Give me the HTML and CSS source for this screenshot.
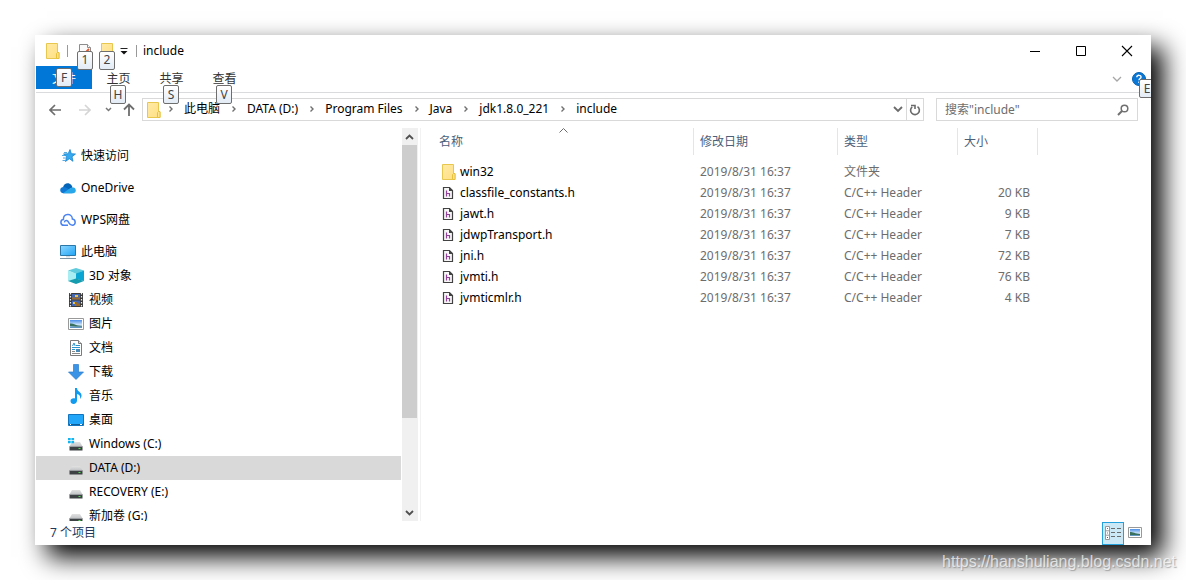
FILE: index.html
```html
<!DOCTYPE html>
<html lang="zh-CN">
<head>
<meta charset="utf-8">
<title>include</title>
<link rel="stylesheet" href="styles.css">
</head>
<body>
<svg class="defs" width="0" height="0" aria-hidden="true">
  <defs>
    <linearGradient id="gold" x1="0" y1="0" x2="1" y2="1"><stop offset="0" stop-color="#ffeaa6"/><stop offset="1" stop-color="#ffdf82"/></linearGradient>
    <linearGradient id="screen" x1="0" y1="0" x2="1" y2="1"><stop offset="0" stop-color="#8fd8ff"/><stop offset="1" stop-color="#1fa4f5"/></linearGradient>
    <linearGradient id="sky" x1="0" y1="0" x2="0" y2="1"><stop offset="0" stop-color="#4a8de8"/><stop offset=".6" stop-color="#cfe6fb"/><stop offset="1" stop-color="#4a86b5"/></linearGradient>
    <linearGradient id="metal" x1="0" y1="0" x2="0" y2="1"><stop offset="0" stop-color="#e2e2e2"/><stop offset="1" stop-color="#bfc2c4"/></linearGradient>
    <symbol id="folder" viewBox="0 0 14 16"><path d="M.5.5h11v9.500h1.500v5.500H.5z" fill="url(#gold)" stroke="#e8c74f"/><path d="M10.500 15.500v-5l1-1h1.500v6z" fill="#ffe28c" stroke="#e8c13c"/></symbol>
    <symbol id="header-file" viewBox="0 0 14 14"><path d="M1.500 1.500h6l3 3v8h-9z" fill="#f6f6f6" stroke="#424242" stroke-width="1.200"/><path d="M7 1v4h4z" fill="#424242"/><path d="M4.500 4.500v6M4.500 7.500h3v3" fill="none" stroke="#93429b" stroke-width="1.200"/></symbol>
    <symbol id="crumb" viewBox="0 0 6 8"><path d="M1.500 1.500 4 4 1.500 6.500" fill="none" stroke="#707070" stroke-width="1.400"/></symbol>
    <symbol id="photo" viewBox="0 0 16 12"><path d="M.5.5h15v11H.5z" fill="#fff" stroke="#999"/><path d="M2 2h12v8H2z" fill="url(#sky)"/><path d="M2 5.500c3-.5 5 1.500 8 2l4 .5v.5c-5 0-8 0-12-.5z" fill="#39705d"/></symbol>
    <symbol id="drive" viewBox="0 0 16 16"><path d="M4 6h8l2.500 4.500h-13z" fill="url(#metal)"/><path d="M1.500 10.500h13v4h-13z" fill="#3e4143"/><path d="M1.500 10.500h13" stroke="#9a9d9f"/><path d="M10.500 12h2v1h-2z" fill="#4be04f"/></symbol>
  </defs>
</svg>
<main class="window">
  <header class="titlebar">
    <svg class="folder" width="14" height="16"><use href="#folder"/></svg>
    <span class="rule"></span>
    <button class="quick" aria-label="属性"><svg width="14" height="16" viewBox="0 0 14 16"><path d="M1.500 1.500h8l3 3v11h-11z" fill="#fafafa" stroke="#8c8c8c"/><path d="M9.500 1.500v3h3" fill="#fff" stroke="#8c8c8c"/><path d="m8.500 8.500 2.500-2.500" stroke="#e4572e" stroke-width="1.800"/></svg><kbd class="tip">1</kbd></button>
    <button class="quick" aria-label="新建文件夹"><svg width="14" height="16" viewBox="0 0 14 16"><path d="M1.500.5h11v15h-11z" fill="url(#gold)" stroke="#e8c74f"/></svg><kbd class="tip">2</kbd></button>
    <button class="more" aria-label="自定义"><svg width="8" height="8" viewBox="0 0 8 8"><path d="M.5 1.500h7" stroke="#222"/><path d="M.5 4h7L4 7.500z" fill="#111"/></svg></button>
    <span class="rule"></span>
    <h1 class="title">include</h1>
    <button class="caption" aria-label="最小化"><svg width="12" height="12" viewBox="0 0 12 12"><path d="M1 6.500h10" stroke="#000"/></svg></button>
    <button class="caption" aria-label="最大化"><svg width="12" height="12" viewBox="0 0 12 12"><path d="M1.500 1.500h9v9h-9z" fill="none" stroke="#000"/></svg></button>
    <button class="caption" aria-label="关闭"><svg width="12" height="12" viewBox="0 0 12 12"><path d="m1 1 10 10M11 1 1 11" stroke="#000" stroke-width="1.100"/></svg></button>
  </header>

  <div class="ribbon">
    <button class="tab file">文件<kbd class="tip">F</kbd></button>
    <button class="tab">主页<kbd class="tip">H</kbd></button>
    <button class="tab">共享<kbd class="tip">S</kbd></button>
    <button class="tab">查看<kbd class="tip">V</kbd></button>
    <span class="spacer"></span>
    <button class="expand" aria-label="展开功能区"><svg width="10" height="6" viewBox="0 0 10 6"><path d="m1 1 4 4 4-4" fill="none" stroke="#a6a6a6" stroke-width="1.300"/></svg></button>
    <button class="help" aria-label="帮助"><svg width="14" height="14" viewBox="0 0 14 14"><circle cx="7" cy="7" r="6.500" fill="#0a78d6" stroke="#0560b0"/><path d="M4.800 5.200c.2-2.600 4.400-2.400 4.200 0C9 6.500 7 6.700 7 8.300M7 9.500V11" fill="none" stroke="#fff" stroke-width="1.400"/></svg><kbd class="tip">E</kbd></button>
  </div>

  <div class="navbar">
    <button class="nav" aria-label="后退"><svg width="12" height="12" viewBox="0 0 12 12"><path d="M12 6H1M6 1 1 6l5 5" fill="none" stroke="#6e6e6e" stroke-width="1.700"/></svg></button>
    <button class="nav" aria-label="前进"><svg width="12" height="12" viewBox="0 0 12 12"><path d="M0 6h11M6 1l5 5-5 5" fill="none" stroke="#d5d5d5" stroke-width="1.600"/></svg></button>
    <button class="recent" aria-label="最近位置"><svg width="7" height="5" viewBox="0 0 7 5"><path d="m1 1 2.500 2.500L6 1" fill="none" stroke="#777" stroke-width="1.500"/></svg></button>
    <button class="up" aria-label="向上"><svg width="12" height="13" viewBox="0 0 12 13"><path d="M6 13V1.500M1 6.500l5-5 5 5" fill="none" stroke="#6e6e6e" stroke-width="1.800"/></svg></button>
    <div class="address">
      <svg class="folder" width="14" height="16"><use href="#folder"/></svg>
      <ol class="crumbs">
        <li><svg width="6" height="8"><use href="#crumb"/></svg><a href="#pc">此电脑</a></li>
        <li><svg width="6" height="8"><use href="#crumb"/></svg><a href="#d">DATA (D:)</a></li>
        <li><svg width="6" height="8"><use href="#crumb"/></svg><a href="#pf">Program Files</a></li>
        <li><svg width="6" height="8"><use href="#crumb"/></svg><a href="#java">Java</a></li>
        <li><svg width="6" height="8"><use href="#crumb"/></svg><a href="#jdk">jdk1.8.0_221</a></li>
        <li><svg width="6" height="8"><use href="#crumb"/></svg><a href="#include">include</a></li>
      </ol>
      <button class="history" aria-label="历史"><svg width="10" height="7" viewBox="0 0 10 7"><path d="m1 1 4 4 4-4" fill="none" stroke="#6b6b6b" stroke-width="1.800"/></svg></button>
      <button class="refresh" aria-label="刷新"><svg width="12" height="12" viewBox="0 0 12 12"><path d="M3.200 2.800A4.400 4.400 0 1 0 8.500 2.600" fill="none" stroke="#6b6b6b" stroke-width="1.600"/><path d="M2 1.500h4V5" fill="none" stroke="#6b6b6b" stroke-width="1.600"/></svg></button>
    </div>
    <form class="search">
      <input class="query" type="search" aria-label="搜索" placeholder='搜索"include"'>
      <button class="go" type="button" aria-label="搜索"><svg width="12" height="12" viewBox="0 0 12 12"><circle cx="7.500" cy="4.500" r="3.300" fill="none" stroke="#707070" stroke-width="1.500"/><path d="M5 7 1 11" stroke="#707070" stroke-width="1.900"/></svg></button>
    </form>
  </div>

  <div class="body">
    <nav class="tree" aria-label="导航窗格">
      <a class="node root" href="#quick"><svg width="16" height="16" viewBox="0 0 16 16"><path d="m10 1.500 1.300 4.200 4.200.3-3.500 2.700 1 4.600-3.700-2.600L5.500 13.500l1.300-4.700L3.500 6l4.700-.3z" fill="#35aaf0" stroke="#1683ce" stroke-width=".8"/><path d="M4 4.500h3M2 7.500h3M3 10h3M2.500 12.500h3" stroke="#2b95dc" stroke-width=".8"/></svg>快速访问</a>
      <a class="node root" href="#onedrive"><svg width="16" height="16" viewBox="0 0 16 16"><path d="M3 7.500C3.500 4 8 1.500 11.300 5c.7.800 1 1.500 1.200 2.500L8 10z" fill="#0364b8"/><path d="M3.500 13.200C-.8 13.200-.8 7.500 3 7c2-.3 4 .8 5.500 2l4 4.200z" fill="#0f78d4"/><path d="M3 13.200 9 9c1.500-1.500 4-2 5.300-1.200C16.500 9 16.500 13.200 13 13.200z" fill="#28a8ea"/></svg>OneDrive</a>
      <a class="node root" href="#wps"><svg width="16" height="16" viewBox="0 0 16 16"><path d="M8 13.300H4C0 13.300 0 8 3.400 7.600 3.200 1.300 12 .8 12.400 7c3.700.5 3.700 6.300 0 6.300-3 0-3-2-4.500-4-1.400-1.600-3.500-.5-3.300 1" fill="none" stroke="#4b83f0" stroke-width="1.500"/></svg>WPS网盘</a>
      <a class="node root" href="#pc"><svg width="16" height="16" viewBox="0 0 16 16"><path d="M.5 1.500h15v10H.5z" fill="url(#screen)" stroke="#2b78a8"/><path d="M6 12h4v1.500H6z" fill="#d6dde2"/><path d="M0 14.500h16" stroke="#7d93a3"/></svg>此电脑</a>
      <a class="node" href="#objects"><svg width="16" height="16" viewBox="0 0 16 16"><path d="m8 0 8 2.500L8 6 0 2.500z" fill="#5fcbdc"/><path d="m0 2.500 8 3V11l-8 2z" fill="#a8edf1"/><path d="m16 2.500-8 3V11l8 2z" fill="#0ba5d4"/><path d="m0 13 8-2.500 8 2.500-8 3z" fill="#159caf"/></svg>3D 对象</a>
      <a class="node" href="#video"><svg width="16" height="16" viewBox="0 0 16 16"><path d="M1 1h14v14H1z" fill="#3b3b3b"/><path d="M4 2h8v5.500H4zM4 8.500h8V14H4z" fill="#4268b4"/><path d="M4 5.500h8v2H4zM7 9l5 3.500V14H7z" fill="#9a6b31"/><path d="M7 3h3v2H7zM5 10h2v2H5z" fill="#f0c43c"/><path d="M2.500 1v14M13.500 1v14" stroke="#eee" stroke-width="1.200" stroke-dasharray="1.500 1.500"/></svg>视频</a>
      <a class="node" href="#pictures"><svg width="16" height="12"><use href="#photo"/></svg>图片</a>
      <a class="node" href="#docs"><svg width="16" height="16" viewBox="0 0 16 16"><path d="M2.500.5h8l3 3v12h-11z" fill="#fff" stroke="#7b7b7b"/><path d="M10.500.5v3h3" fill="#ddd" stroke="#7b7b7b"/><path d="m4.500 6 1.500-3 1.200 3M8 5.500h4M4 7.500h8M4 9.500h3" fill="none" stroke="#2894d0"/><path d="M4 11.500h3M4 13.500h8" stroke="#888"/><path d="M8 9h4v3H8z" fill="#498bb6"/></svg>文档</a>
      <a class="node" href="#downloads"><svg width="16" height="16" viewBox="0 0 16 16"><path d="M5.500.5h5V8h5L8 15.500.5 8h5z" fill="#3b94e6" stroke="#297dcb" stroke-width=".7"/></svg>下载</a>
      <a class="node" href="#music"><svg width="16" height="16" viewBox="0 0 16 16"><path d="M7 0h2c0 4 5 4 4.500 8-.2 1.500-1 2.500-1.500 3 .7-3-.5-4-3-5v6.500C9 17 2.500 17 2.500 13c0-2 2-3 4.500-2.500z" fill="#109af0"/></svg>音乐</a>
      <a class="node" href="#desktop"><svg width="16" height="16" viewBox="0 0 16 16"><path d="M.5 2.500h15v11H.5z" fill="#22a6fa" stroke="#1274bd"/><path d="M1 12.500h14" stroke="#0c5f9d"/><path d="M2 12.500h1M12 12.500h2" stroke="#fff"/></svg>桌面</a>
      <a class="node" href="#c"><svg width="16" height="16" viewBox="0 0 16 16"><use href="#drive" width="16" height="16"/><path d="M0 2h2.700v2.200H0zM3.400 2h2.700v2.200H3.400zM0 5h2.700v2.200H0zM3.400 5h2.700v2.200H3.400z" fill="#12b5f0"/></svg>Windows (C:)</a>
      <a class="node selected" href="#d" aria-current="true"><svg width="16" height="16"><use href="#drive"/></svg>DATA (D:)</a>
      <a class="node" href="#e"><svg width="16" height="16"><use href="#drive"/></svg>RECOVERY (E:)</a>
      <a class="node" href="#g"><svg width="16" height="16"><use href="#drive"/></svg>新加卷 (G:)</a>
    </nav>
    <div class="scrollbar">
      <button class="step" aria-label="向上滚动"><svg width="9" height="6" viewBox="0 0 9 6"><path d="m1 5 3.500-3.500L8 5" fill="none" stroke="#505050" stroke-width="1.800"/></svg></button>
      <div class="track"><div class="thumb"></div></div>
      <button class="step" aria-label="向下滚动"><svg width="9" height="6" viewBox="0 0 9 6"><path d="m1 1 3.500 3.500L8 1" fill="none" stroke="#505050" stroke-width="1.800"/></svg></button>
    </div>
    <section class="files">
      <table class="list">
        <colgroup><col class="c-name"><col class="c-date"><col class="c-type"><col class="c-size"></colgroup>
        <thead>
          <tr><th scope="col" aria-sort="ascending">名称<svg class="sort" width="9" height="5" viewBox="0 0 9 5"><path d="m.5 4.500 4-4 4 4" fill="none" stroke="#6b6b6b"/></svg></th><th scope="col">修改日期</th><th scope="col">类型</th><th scope="col">大小</th></tr>
        </thead>
        <tbody>
          <tr><td><span class="item"><svg width="14" height="16"><use href="#folder"/></svg>win32</span></td><td>2019/8/31 16:37</td><td>文件夹</td><td></td></tr>
          <tr><td><span class="item"><svg width="14" height="14"><use href="#header-file"/></svg>classfile_constants.h</span></td><td>2019/8/31 16:37</td><td>C/C++ Header</td><td>20 KB</td></tr>
          <tr><td><span class="item"><svg width="14" height="14"><use href="#header-file"/></svg>jawt.h</span></td><td>2019/8/31 16:37</td><td>C/C++ Header</td><td>9 KB</td></tr>
          <tr><td><span class="item"><svg width="14" height="14"><use href="#header-file"/></svg>jdwpTransport.h</span></td><td>2019/8/31 16:37</td><td>C/C++ Header</td><td>7 KB</td></tr>
          <tr><td><span class="item"><svg width="14" height="14"><use href="#header-file"/></svg>jni.h</span></td><td>2019/8/31 16:37</td><td>C/C++ Header</td><td>72 KB</td></tr>
          <tr><td><span class="item"><svg width="14" height="14"><use href="#header-file"/></svg>jvmti.h</span></td><td>2019/8/31 16:37</td><td>C/C++ Header</td><td>76 KB</td></tr>
          <tr><td><span class="item"><svg width="14" height="14"><use href="#header-file"/></svg>jvmticmlr.h</span></td><td>2019/8/31 16:37</td><td>C/C++ Header</td><td>4 KB</td></tr>
        </tbody>
      </table>
    </section>
  </div>

  <footer class="status">
    <span class="count">7 个项目</span>
    <button class="view active" aria-label="详细信息"><svg width="16" height="14" viewBox="0 0 16 14"><path d="M.5.5h4v13h-4zM.5 4.800h4M.5 9.200h4" fill="#fff" stroke="#999"/><path d="M2 2h1v1H2z" fill="#3c9b50"/><path d="M2 6.500h1v1H2z" fill="#2f86e0"/><path d="M2 11h1v1H2z" fill="#d22"/><path d="M6 2.500h4M12 2.500h4M6 6.500h4M12 6.500h4M6 10.500h4M12 10.500h4" stroke="#6b6b6b"/></svg></button>
    <button class="view" aria-label="大图标"><svg width="14" height="12" viewBox="0 0 14 12"><path d="M.5.500h13v10H.5z" fill="#fff" stroke="#999"/><path d="M2 2h10v7H2z" fill="url(#sky)"/><path d="M2 5c3 0 5 1.500 10 2v1H2z" fill="#39705d"/></svg></button>
  </footer>
</main>
<p class="watermark">https://hanshuliang.blog.csdn.net</p>
</body>
</html>
```

FILE: styles.css
```css
* { box-sizing: border-box; }

body {
  margin: 0;
  height: 100vh;
  padding: 35px;
  display: flex;
  background: #fff;
  color: #000;
  font: 12px/16px "Noto Sans", "Noto Sans CJK SC", sans-serif;
}

button, input { font: inherit; color: inherit; border: 0; background: none; padding: 0; margin: 0; }
button { display: flex; align-items: center; justify-content: center; flex: none; }
a { color: inherit; text-decoration: none; }
svg { flex: none; display: block; }
.defs { position: absolute; }
.spacer { flex: 1; }

.window {
  flex: 1;
  min-width: 0;
  display: flex;
  flex-direction: column;
  padding: 0 1px;
  overflow: hidden;
  background: #fff;
  box-shadow: 12px 12px 24px #000;
}

.tip {
  position: absolute;
  display: flex;
  align-items: center;
  justify-content: center;
  width: 16px;
  height: 19px;
  border: 1px solid #6e6e6e;
  border-radius: 2px;
  background: linear-gradient(#fff, #e3ebf5);
  color: #444;
  font: 12px/16px "Noto Sans", sans-serif;
  z-index: 1;
}

.titlebar { display: flex; align-items: center; height: 31px; padding-left: 10px; }
.rule { width: 1px; height: 12px; margin: 0 6px 0 7px; background: #999; }
.quick { position: relative; width: 22px; height: 22px; }
.quick .tip { left: 3px; top: 11px; }
.more { width: 12px; height: 22px; }
.more + .rule { margin-left: 6px; }
.title { flex: 1; margin: 0; font-size: 12px; font-weight: 400; }
.caption { width: 46px; height: 31px; }

.ribbon { display: flex; height: 27px; padding-bottom: 3px; border-bottom: 1px solid #dadbdc; }
.tab { position: relative; width: 53px; padding-top: 2px; color: #333; }
.tab.file { width: 56px; background: #0178d7; color: #fff; }
.tab .tip { left: 18px; top: 19px; }
.tab.file .tip { left: 20px; top: 2px; }
.expand { width: 30px; padding-top: 2px; }
.help { position: relative; width: 14px; margin-right: 4px; padding-top: 2px; }
.help .tip { left: 7px; top: 13px; }

.navbar { display: flex; align-items: center; height: 33px; padding: 0 12px 0 4px; }
.nav { width: 30px; height: 22px; }
.recent { width: 16px; height: 22px; }
.up { width: 26px; height: 22px; }
.address { flex: 1; min-width: 0; display: flex; align-items: center; height: 23px; padding-left: 4px; border: 1px solid #d9d9d9; }
.crumbs { flex: 1; display: flex; margin: 0; padding: 0 0 1px; list-style: none; }
.crumbs li { display: flex; align-items: center; white-space: nowrap; }
.crumbs svg { margin: 0 10px 0 11px; }
.crumbs li:first-child svg { margin-left: 7px; }
.history { width: 16px; height: 21px; }
.refresh { width: 17px; height: 21px; border-left: 1px solid #d9d9d9; }
.search { display: flex; width: 202px; height: 23px; margin-left: 12px; border: 1px solid #d9d9d9; }
.query { flex: 1; min-width: 0; padding-left: 8px; outline: 0; appearance: none; }
.query::placeholder { color: #6d6d6d; opacity: 1; }
.go { width: 28px; }

.body { flex: 1; min-height: 0; display: flex; padding-top: 2px; }
.tree { width: 366px; flex: none; padding: 16px 1px 0 0; overflow: hidden; }
.node { display: flex; align-items: center; gap: 5px; height: 24px; padding-left: 32px; }
.root { padding-left: 24px; }
.root + .root { margin-top: 8px; }
.selected { background: #d9d9d9; }

.scrollbar { display: flex; flex-direction: column; width: 16px; flex: none; background: #f0f0f0; }
.step { height: 17px; padding-right: 1px; }
.track { flex: 1; padding-right: 1px; }
.thumb { height: 76%; background: #cdcdcd; }

.files { flex: 1; min-width: 0; margin-left: 2px; border-left: 1px solid #f2f2f2; overflow: hidden; }
.list { table-layout: fixed; border-collapse: separate; border-spacing: 0; width: 617px; }
.c-name { width: 273px; }
.c-date { width: 144px; }
.c-type { width: 120px; }
.c-size { width: 80px; }
th { position: relative; height: 27px; padding: 0 6px; border-right: 1px solid #e5e5e5; color: #4c607a; font-weight: 400; text-align: left; }
th:first-child { padding-left: 18px; }
.sort { position: absolute; left: 138px; top: 0; }
tbody::before { content: ""; display: block; height: 6px; }
td { height: 21px; padding: 0 6px; color: #6d6d6d; white-space: nowrap; }
td:first-child { padding-left: 21px; color: #000; }
td:last-child { padding-right: 8px; text-align: right; }
.item { display: flex; align-items: center; gap: 4px; }

.status { display: flex; align-items: center; height: 24px; padding: 0 4px 0 14px; color: #1e395b; }
.count { flex: 1; }
.view { width: 22px; height: 23px; }
.view.active { border: 1px solid #26a0da; background: #cbe8f6; }

.watermark {
  position: absolute;
  right: 10px;
  bottom: 9px;
  margin: 0;
  color: rgba(255, 255, 255, .7);
  text-shadow: 1px 1px 1px rgba(110, 110, 110, .5);
  font: 16px/18px "Liberation Sans", Arial, sans-serif;
}
```
